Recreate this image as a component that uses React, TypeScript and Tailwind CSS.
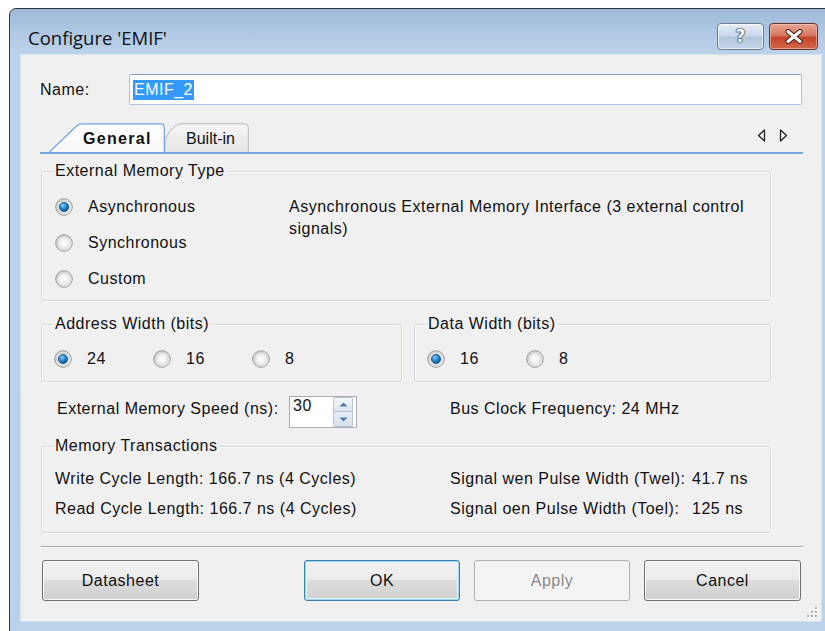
import { useId } from "react";

function Radio({ checked }: { checked?: boolean }) {
  const id = useId().replace(/:/g, "");
  return (
    <svg width="18" height="18" viewBox="0 0 18 18" className="shrink-0">
      <defs>
        <linearGradient id={`o${id}`} x1="0" y1="0" x2="1" y2="1">
          <stop offset="0" stopColor="#c9c9c9" />
          <stop offset="1" stopColor="#f4f4f4" />
        </linearGradient>
        <radialGradient id={`i${id}`} cx="0.5" cy="0.5" r="0.6">
          <stop offset="0" stopColor="#ffffff" />
          <stop offset="1" stopColor="#e4e4e4" />
        </radialGradient>
        <radialGradient id={`d${id}`} cx="0.4" cy="0.35" r="0.7">
          <stop offset="0" stopColor="#8fd3ff" />
          <stop offset="0.5" stopColor="#1f86cc" />
          <stop offset="1" stopColor="#0d4c84" />
        </radialGradient>
      </defs>
      <circle cx="9" cy="9" r="8.3" fill={`url(#o${id})`} stroke="#949494" strokeWidth="0.9" />
      <circle cx="9" cy="9" r="6.2" fill={`url(#i${id})`} stroke="#d0d0d0" strokeWidth="0.6" />
      {checked && <circle cx="9" cy="9" r="4.6" fill={`url(#d${id})`} stroke="#1c4f7c" strokeWidth="0.8" />}
    </svg>
  );
}

function Option({ label, checked, w }: { label: string; checked?: boolean; w?: string }) {
  return (
    <div className={`flex items-center gap-[15px] ${w ?? ""}`}>
      <Radio checked={checked} />
      <span className="leading-[18px]">{label}</span>
    </div>
  );
}

function WinButton({ label, kind, w }: { label: string; kind?: "default" | "disabled"; w: string }) {
  if (kind === "disabled") {
    return (
      <div className={`${w} h-[41px] rounded-[3px] border border-[#adb2b5] bg-[#f4f4f4] flex items-center justify-center text-[#8a8a8a]`}>
        {label}
      </div>
    );
  }
  const border = kind === "default" ? "border-[#3c7fb1] shadow-[inset_0_0_0_1px_#9fd5f3,inset_0_0_0_2px_#e2f4fd]" : "border-[#707070] shadow-[inset_0_0_0_1px_#fbfbfb]";
  return (
    <div className={`${w} h-[41px] rounded-[3px] border ${border} bg-[linear-gradient(#f2f2f2_0%,#ebebeb_50%,#dddddd_50%,#cfcfcf_100%)] flex items-center justify-center`}>
      {label}
    </div>
  );
}

function Triangle({ dir }: { dir: "left" | "right" }) {
  return (
    <svg width="9" height="13" viewBox="0 0 9 13">
      {dir === "left" ? (
        <path d="M7.5 1 L1.5 6.5 L7.5 12 Z" fill="none" stroke="#222" strokeWidth="1.3" strokeLinejoin="round" />
      ) : (
        <path d="M1.5 1 L7.5 6.5 L1.5 12 Z" fill="none" stroke="#222" strokeWidth="1.3" strokeLinejoin="round" />
      )}
    </svg>
  );
}

export default function App() {
  return (
    <div className="w-[825px] h-[631px] overflow-hidden bg-white font-['Liberation_Sans',Arial,sans-serif] text-[16px] tracking-[0.5px] text-[#111]">
      {/* window frame */}
      <div className="ml-[9px] mt-[8px] w-[826px] pb-[14px] border border-[#30363c] rounded-t-[7px] bg-[linear-gradient(#9fbad8_0px,#b3cbe5_30px,#bcd3eb_46px,#bad1ea_100%)] flex flex-col">
        {/* caption */}
        <div className="h-[46px] flex items-start">
          <div className="ml-[18px] mt-[16px] font-['Open_Sans',sans-serif] text-[18.5px] leading-[26px] tracking-normal text-[#111]">
            Configure 'EMIF'
          </div>
          <div className="ml-auto mr-[16px] mt-[14px] flex gap-[5px]">
            <div className="w-[47px] h-[27px] rounded-[4px] border border-[#6f7f93] bg-[linear-gradient(#e4ecf6_0%,#c9d8ea_48%,#b1c5dc_52%,#c4d6ea_100%)] shadow-[inset_0_0_0_1px_rgba(255,255,255,0.6)] flex items-center justify-center">
              <span className="font-['DejaVu_Sans',sans-serif] font-bold text-[17px] leading-none tracking-normal text-white [text-shadow:0_0_1px_#1d2a3a,0_0_1px_#1d2a3a,0_0_2px_#1d2a3a]">?</span>
            </div>
            <div className="w-[49px] h-[27px] rounded-[4px] border border-[#6b2e2b] bg-[linear-gradient(#e8a493_0%,#d77a62_45%,#c4432a_55%,#d46a4c_100%)] shadow-[inset_0_0_0_1px_rgba(255,220,210,0.5)] flex items-center justify-center">
              <svg width="20" height="15" viewBox="0 0 20 15">
                <path d="M4 2.5 L16 12.5 M16 2.5 L4 12.5" stroke="#4a1d17" strokeWidth="5" strokeLinecap="round" />
                <path d="M4 2.5 L16 12.5 M16 2.5 L4 12.5" stroke="#ffffff" strokeWidth="3" strokeLinecap="round" />
              </svg>
            </div>
          </div>
        </div>

        {/* client area */}
        <div className="relative ml-[11px] w-[800px] h-[566px] bg-[#f0f0f0] shadow-[0_0_0_1px_#d6e3f0] flex flex-col pl-[20px]">
          {/* name */}
          <div className="mt-[19px] h-[31px] flex items-center">
            <div className="-ml-[1px] w-[89px]">Name:</div>
            <div className="w-[673px] h-[31px] rounded-[2px] border border-[#a9c4e2] border-t-[#7e9fc6] bg-white flex items-center pl-[3px]">
              <span className="bg-[#3399ff] text-white leading-[20px] px-[1px]">EMIF_2</span>
            </div>
          </div>

          {/* tab strip */}
          <div className="mt-[18px] -ml-[1px] w-[763px] h-[31px] border-b-2 border-[#78aae6] flex items-end">
            <div className="relative z-10 ml-[9px] w-[116px] h-[29px]">
              <svg className="absolute inset-0" width="116" height="29" viewBox="0 0 116 29">
                <defs>
                  <linearGradient id="tabSel" x1="0" y1="0" x2="0" y2="1">
                    <stop offset="0" stopColor="#ffffff" />
                    <stop offset="1" stopColor="#f6f6f6" />
                  </linearGradient>
                </defs>
                <path d="M0.5 29 L27 3.5 Q29.5 0.8 33 0.8 L111.5 0.8 Q115.3 0.8 115.3 4.5 L115.3 29" fill="url(#tabSel)" stroke="#6fa6e6" strokeWidth="1.2" />
              </svg>
              <div className="relative h-full flex items-center pl-[34px] pt-[2px] font-bold tracking-[1.3px]">General</div>
            </div>
            <div className="relative w-[84px] h-[29px]">
              <svg className="absolute inset-0" width="84" height="29" viewBox="0 0 84 29">
                <defs>
                  <linearGradient id="tabOff" x1="0" y1="0" x2="0" y2="1">
                    <stop offset="0" stopColor="#f6f6f6" />
                    <stop offset="1" stopColor="#e6e6e6" />
                  </linearGradient>
                </defs>
                <path d="M0 29 L0 17 Q5 6 11 2.5 Q13.5 0.8 17 0.8 L79.5 0.8 Q83.3 0.8 83.3 4.5 L83.3 29" fill="url(#tabOff)" stroke="#b2b8bf" strokeWidth="1" />
              </svg>
              <div className="relative h-full flex items-center pl-[21px] pt-[2px] tracking-normal">Built-in</div>
            </div>
            <div className="ml-auto mr-[15px] mb-[10px] flex gap-[13px]">
              <Triangle dir="left" />
              <Triangle dir="right" />
            </div>
          </div>

          {/* External Memory Type */}
          <fieldset className="mt-[8px] w-[730px] rounded-[3px] border border-[#d3d9de] shadow-[inset_1px_1px_0_#fbfbfb,1px_1px_0_#fbfbfb]">
            <legend className="ml-[11px] px-[2px] leading-[18px] bg-[#f0f0f0]">External Memory Type</legend>
            <div className="flex pt-[9px] pb-[3px]">
              <div className="w-[247px] pl-[13px] flex flex-col">
                <div className="h-[36px] flex items-center"><Option label="Asynchronous" checked /></div>
                <div className="h-[36px] flex items-center"><Option label="Synchronous" /></div>
                <div className="h-[36px] flex items-center"><Option label="Custom" /></div>
              </div>
              <div className="pt-[7px] leading-[22px]">
                Asynchronous External Memory Interface (3 external control
                <br />
                signals)
              </div>
            </div>
          </fieldset>

          {/* widths */}
          <div className="mt-[14px] flex gap-[12px]">
            <fieldset className="w-[361px] rounded-[3px] border border-[#d3d9de] shadow-[inset_1px_1px_0_#fbfbfb,1px_1px_0_#fbfbfb]">
              <legend className="ml-[11px] px-[2px] leading-[18px] bg-[#f0f0f0]">Address Width (bits)</legend>
              <div className="pt-[8px] pb-[4px] pl-[12px] h-[48px] flex items-center">
                <Option label="24" checked w="w-[99px]" />
                <Option label="16" w="w-[99px]" />
                <Option label="8" w="w-[99px]" />
              </div>
            </fieldset>
            <fieldset className="w-[357px] rounded-[3px] border border-[#d3d9de] shadow-[inset_1px_1px_0_#fbfbfb,1px_1px_0_#fbfbfb]">
              <legend className="ml-[11px] px-[2px] leading-[18px] bg-[#f0f0f0]">Data Width (bits)</legend>
              <div className="pt-[8px] pb-[4px] pl-[12px] h-[48px] flex items-center">
                <Option label="16" checked w="w-[99px]" />
                <Option label="8" w="w-[99px]" />
              </div>
            </fieldset>
          </div>

          {/* speed */}
          <div className="mt-[14px] h-[32px] flex items-start">
            <div className="ml-[16px] mt-[4px] w-[232px] leading-[18px]">External Memory Speed (ns):</div>
            <div className="w-[68px] h-[32px] border border-[#a9abb2] bg-white flex items-start">
              <div className="pl-[3px] pt-[1px] leading-[16px] flex-1">30</div>
              <div className="mr-[3px] w-[20px] h-[30px] flex flex-col">
                <div className="h-[15px] border border-[#b7c3d1] rounded-t-[2px] bg-[linear-gradient(#f4f7fb,#dde6f0)] flex items-center justify-center">
                  <svg width="9" height="5" viewBox="0 0 9 5"><path d="M0.5 4.5 L4.5 0.5 L8.5 4.5 Z" fill="#4f78b0" /></svg>
                </div>
                <div className="h-[15px] border border-t-0 border-[#b7c3d1] rounded-b-[2px] bg-[linear-gradient(#e8eef5,#d6e0ec)] flex items-center justify-center">
                  <svg width="9" height="5" viewBox="0 0 9 5"><path d="M0.5 0.5 L4.5 4.5 L8.5 0.5 Z" fill="#4f78b0" /></svg>
                </div>
              </div>
            </div>
            <div className="ml-[93px] mt-[4px] leading-[18px]">Bus Clock Frequency: 24 MHz</div>
          </div>

          {/* Memory Transactions */}
          <fieldset className="mt-[9px] w-[730px] rounded-[3px] border border-[#d3d9de] shadow-[inset_1px_1px_0_#fbfbfb,1px_1px_0_#fbfbfb]">
            <legend className="ml-[11px] px-[2px] leading-[18px] bg-[#f0f0f0]">Memory Transactions</legend>
            <div className="pt-[9px] pb-[8px] grid grid-cols-[408px_242px_1fr]">
              <div className="h-[30px] pl-[13px] flex items-center">Write Cycle Length: 166.7 ns (4 Cycles)</div>
              <div className="h-[30px] flex items-center">Signal wen Pulse Width (Twel):</div>
              <div className="h-[30px] flex items-center">41.7 ns</div>
              <div className="h-[30px] pl-[13px] flex items-center">Read Cycle Length: 166.7 ns (4 Cycles)</div>
              <div className="h-[30px] flex items-center">Signal oen Pulse Width (Toel):</div>
              <div className="h-[30px] flex items-center">125 ns</div>
            </div>
          </fieldset>

          {/* separator */}
          <div className="mt-[13px] w-[762px] h-[2px] border-t border-[#a3a3a3] border-b border-b-white" />

          {/* buttons */}
          <div className="mt-[12px] ml-[1px] flex">
            <WinButton label="Datasheet" w="w-[157px]" />
            <div className="ml-[105px]"><WinButton label="OK" kind="default" w="w-[156px]" /></div>
            <div className="ml-[14px]"><WinButton label="Apply" kind="disabled" w="w-[156px]" /></div>
            <div className="ml-[14px]"><WinButton label="Cancel" w="w-[157px]" /></div>
          </div>

          {/* size grip */}
          <svg className="absolute right-[3px] bottom-[3px]" width="12" height="12" viewBox="0 0 12 12">
            {[[9, 1], [9, 5], [5, 5], [9, 9], [5, 9], [1, 9]].map(([x, y]) => (
              <g key={`${x}-${y}`}>
                <rect x={x + 1} y={y + 1} width="2" height="2" fill="#ffffff" />
                <rect x={x} y={y} width="2" height="2" fill="#a8abb0" />
              </g>
            ))}
          </svg>
        </div>
      </div>
    </div>
  );
}
